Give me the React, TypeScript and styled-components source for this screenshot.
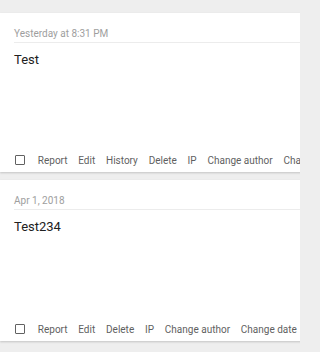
import React from "react";
import styled, { createGlobalStyle } from "styled-components";

const Global = createGlobalStyle`
  html, body { margin: 0; padding: 0; background: #eeeeee; overflow: hidden; }
  body { font-family: Roboto, "Liberation Sans", Arial, sans-serif; }
`;

const Page = styled.div`
  padding-top: 13px;
  width: 300px;
  overflow: hidden;
`;

const Card = styled.div<{ $h: number }>`
  background: #fff;
  height: ${(p) => p.$h}px;
  margin-bottom: 8px;
  display: flex;
  flex-direction: column;
  box-shadow: 0 1px 2px rgba(0, 0, 0, 0.18);
  width: 360px;
`;

const Header = styled.div`
  margin-left: 14px;
  height: 30px;
  box-sizing: border-box;
  border-bottom: 1px solid #ececec;
  display: flex;
  align-items: flex-end;
  padding-bottom: 3px;
  font-size: 10px;
  color: #9e9e9e;
`;

const Title = styled.div`
  margin: 9px 0 0 14px;
  font-size: 13px;
  color: #212121;
`;

const Actions = styled.div`
  margin-top: auto;
  margin-bottom: 4px;
  padding-left: 15px;
  height: 16px;
  display: flex;
  align-items: center;
  white-space: nowrap;
  font-size: 10px;
  color: #5f5f5f;
  gap: 10.8px;
`;

const Check = styled.span`
  width: 8px;
  height: 8px;
  border: 1.5px solid #616161;
  border-radius: 1px;
  margin-right: 2px;
  flex: none;
`;

const Action = styled.span``;

type Post = { date: string; title: string; actions: string[]; h: number };

const posts: Post[] = [
  {
    date: "Yesterday at 8:31 PM",
    title: "Test",
    actions: ["Report", "Edit", "History", "Delete", "IP", "Change author", "Change date"],
    h: 159,
  },
  {
    date: "Apr 1, 2018",
    title: "Test234",
    actions: ["Report", "Edit", "Delete", "IP", "Change author", "Change date"],
    h: 161,
  },
];

export default function App() {
  return (
    <>
      <Global />
      <Page>
        {posts.map((p) => (
          <Card key={p.title} $h={p.h}>
            <Header>{p.date}</Header>
            <Title>{p.title}</Title>
            <Actions>
              <Check />
              {p.actions.map((a) => (
                <Action key={a}>{a}</Action>
              ))}
            </Actions>
          </Card>
        ))}
      </Page>
    </>
  );
}
